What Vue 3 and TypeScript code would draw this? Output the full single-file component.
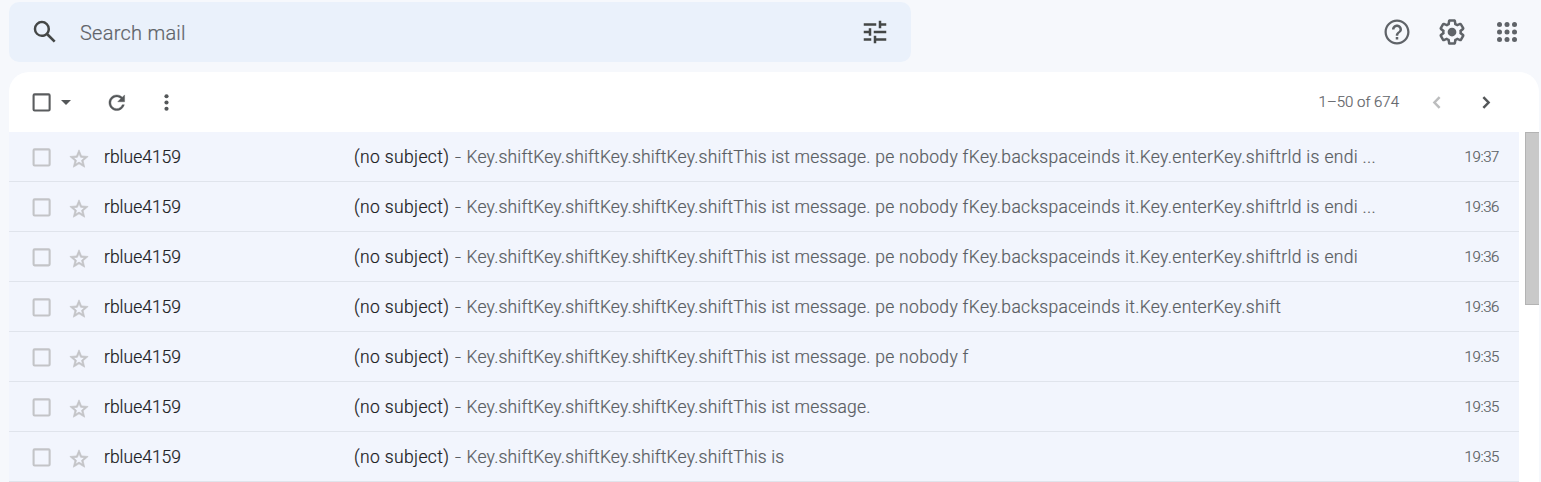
<script setup lang="ts">
interface Mail {
  id: number
  sender: string
  subject: string
  lead: string
  rest: string
  time: string
}

const keys = 'Key.shiftKey.shiftKey.shiftKey.shift'
const bodies: [string, string, string][] = [
  ['This ist message.', ' pe nobody fKey.backspaceinds it.Key.enterKey.shiftrld is endi ...', '19:37'],
  ['This ist message.', ' pe nobody fKey.backspaceinds it.Key.enterKey.shiftrld is endi ...', '19:36'],
  ['This ist message.', ' pe nobody fKey.backspaceinds it.Key.enterKey.shiftrld is endi', '19:36'],
  ['This ist message.', ' pe nobody fKey.backspaceinds it.Key.enterKey.shift', '19:36'],
  ['This ist message.', ' pe nobody f', '19:35'],
  ['This ist message.', '', '19:35'],
  ['This is', '', '19:35'],
]
const mails: Mail[] = bodies.map(([lead, rest, time], id) => ({
  id,
  sender: 'rblue4159',
  subject: '(no subject)',
  lead: keys + lead,
  rest,
  time,
}))
const dots = [6, 12, 18]
</script>

<template>
  <div class="page">
    <header class="header">
      <div class="search">
        <svg class="icon-lg" viewBox="0 0 24 24"><path d="M20.49 19l-5.73-5.73C15.53 12.2 16 10.91 16 9.5A6.5 6.5 0 1 0 9.5 16c1.41 0 2.7-.47 3.77-1.24L19 20.49 20.49 19zM5 9.5C5 7.01 7.01 5 9.5 5S14 7.01 14 9.5 11.99 14 9.5 14 5 11.99 5 9.5z" /></svg>
        <span class="placeholder">Search mail</span>
        <svg class="icon-lg" viewBox="0 0 24 24"><path d="M3 17v2h6v-2H3zM3 5v2h10V5H3zm10 16v-2h8v-2h-8v-2h-2v6h2zM7 9v2H3v2h4v2h2V9H7zm14 4v-2H11v2h10zm-6-4h2V7h4V5h-4V3h-2v6z" /></svg>
      </div>
      <nav class="actions">
        <svg class="icon-lg" viewBox="0 0 24 24"><path d="M11 18h2v-2h-2v2zm1-16C6.48 2 2 6.48 2 12s4.48 10 10 10 10-4.48 10-10S17.52 2 12 2zm0 18.200c-4.520 0-8.200-3.680-8.200-8.200S7.480 3.800 12 3.800s8.200 3.680 8.200 8.200-3.680 8.200-8.200 8.200zM12 6c-2.210 0-4 1.790-4 4h2c0-1.100.9-2 2-2s2 .9 2 2c0 2-3 1.750-3 5h2c0-2.250 3-2.500 3-5 0-2.210-1.790-4-4-4z" /></svg>
        <svg class="icon-lg" viewBox="0 0 24 24">
          <path fill-rule="evenodd" d="M13.850 22.250h-3.700c-.74 0-1.360-.54-1.450-1.270l-.27-1.890c-.27-.14-.53-.29-.79-.46l-1.800.72c-.7.26-1.470-.03-1.810-.65L2.200 15.530c-.35-.66-.2-1.440.36-1.880l1.530-1.190c-.01-.15-.02-.3-.02-.46 0-.15.01-.31.02-.46l-1.520-1.190c-.59-.45-.74-1.260-.37-1.880l1.850-3.190c.34-.62 1.110-.9 1.790-.63l1.810.73c.26-.17.52-.32.78-.46l.27-1.910c.09-.7.71-1.250 1.440-1.250h3.700c.74 0 1.360.54 1.450 1.270l.27 1.890c.27.14.53.29.79.46l1.800-.72c.71-.26 1.480.03 1.820.65l1.840 3.180c.36.66.2 1.440-.36 1.880l-1.520 1.190c.01.15.02.3.02.46s-.01.31-.02.46l1.520 1.190c.56.45.72 1.230.37 1.860l-1.860 3.220c-.34.62-1.110.9-1.800.63l-1.800-.72c-.26.17-.52.32-.78.46l-.27 1.910c-.1.68-.72 1.220-1.460 1.220zm-3.230-2h2.760l.37-2.550.53-.22c.44-.18.88-.44 1.340-.78l.45-.34 2.380.96 1.380-2.400-2.030-1.580.07-.56c.03-.26.06-.51.06-.78s-.03-.53-.06-.78l-.07-.56 2.030-1.580-1.390-2.400-2.390.96-.45-.35c-.42-.32-.87-.58-1.330-.77l-.52-.22-.37-2.550h-2.760l-.37 2.550-.53.21c-.44.19-.88.44-1.340.79l-.45.33-2.380-.95-1.390 2.390 2.030 1.580-.07.56a7 7 0 0 0-.06.79c0 .26.02.53.06.78l.07.56-2.030 1.580 1.380 2.400 2.390-.96.45.35c.43.33.86.58 1.330.77l.53.22.38 2.550z" />
          <circle cx="12" cy="12" r="3.500" />
        </svg>
        <svg class="icon-lg" viewBox="0 0 24 24">
          <template v-for="y in dots" :key="y">
            <circle v-for="x in dots" :key="x" :cx="x" :cy="y" r="2" />
          </template>
        </svg>
      </nav>
    </header>

    <main class="panel">
      <div class="toolbar">
        <svg class="icon box" viewBox="0 0 24 24"><rect x="4.400" y="4.200" width="15.400" height="15.400" rx="1" /></svg>
        <svg class="caret" viewBox="0 0 10 5"><path d="M0 0h10L5 5z" /></svg>
        <svg class="icon refresh" viewBox="0 0 24 24"><path d="M17.650 6.350C16.200 4.900 14.210 4 12 4c-4.420 0-7.990 3.580-7.990 8s3.570 8 7.990 8c3.730 0 6.840-2.550 7.730-6h-2.080c-.82 2.330-3.040 4-5.650 4-3.310 0-6-2.690-6-6s2.690-6 6-6c1.660 0 3.140.69 4.220 1.780L13 11h7V4l-2.350 2.350z" /></svg>
        <svg class="icon more" viewBox="0 0 24 24"><circle v-for="y in dots" :key="y" cx="12" :cy="y" r="2" /></svg>
        <span class="count">1–50 of 674</span>
        <svg class="icon prev" viewBox="0 0 24 24"><path d="M15 6.800l-5 5.200 5 5.200" /></svg>
        <svg class="icon next" viewBox="0 0 24 24"><path d="M9 6.800l5 5.200-5 5.200" /></svg>
      </div>
      <div class="content">
        <div class="list">
          <div v-for="mail in mails" :key="mail.id" class="row">
            <svg class="icon box" viewBox="0 0 24 24"><rect x="4.400" y="4.200" width="15.400" height="15.400" rx="1" /></svg>
            <svg class="icon star" viewBox="0 0 24 24"><path d="M22 9.240l-7.190-.62L12 2 9.190 8.630 2 9.240l5.460 4.730L5.820 21 12 17.270 18.180 21l-1.630-7.030L22 9.240zM12 15.400l-3.760 2.270 1-4.280-3.320-2.880 4.380-.38L12 6.100l1.710 4.040 4.380.38-3.320 2.880 1 4.280L12 15.400z" /></svg>
            <span class="sender">{{ mail.sender }}</span>
            <span class="subject">{{ mail.subject }}</span>
            <span class="dash">-</span>
            <span class="snippet">{{ mail.lead }}<span class="rest">{{ mail.rest }}</span></span>
            <time class="time">{{ mail.time }}</time>
          </div>
        </div>
        <div class="scroll"><div class="thumb"></div></div>
      </div>
    </main>
  </div>
</template>

<style>
body {
  overflow: hidden;
  background: #f6f8fc;
}
</style>

<style scoped>
.page {
  box-sizing: border-box;
  width: 1541px;
  height: 482px;
  padding: 2px 2px 0 9px;
  overflow: hidden;
  background: #f6f8fc;
  font-family: Roboto, "Open Sans", sans-serif;
  font-weight: 300;
  white-space: nowrap;
  -webkit-text-stroke-width: 0.2px;
}
.header {
  display: flex;
  height: 60px;
  margin-bottom: 10px;
  justify-content: space-between;
}
.search {
  box-sizing: border-box;
  display: flex;
  align-items: center;
  width: 902px;
  padding: 0 21px;
  border-radius: 10px;
  background: #eaf1fb;
  fill: #444746;
}
.placeholder {
  flex: 1;
  margin: 2px 0 0 20px;
  color: #5f6368;
  font-size: 20px;
  letter-spacing: 0.25px;
}
.actions {
  display: flex;
  align-items: center;
  gap: 25px;
  padding-right: 17px;
  fill: #5f6368;
}
svg {
  flex: none;
}
.icon-lg {
  width: 30px;
  height: 30px;
}
.icon {
  width: 25px;
  height: 25px;
}
.box {
  fill: none;
  stroke: #5a5c5e;
  stroke-width: 2;
}
.panel {
  height: 410px;
  border-radius: 20px 20px 0 0;
  background: #fff;
}
.toolbar {
  box-sizing: border-box;
  display: flex;
  align-items: center;
  height: 60px;
  padding: 1px 40px 0 20px;
  fill: #545759;
}
.caret {
  width: 10px;
  height: 5px;
  margin-left: 7px;
}
.refresh {
  width: 23.5px;
  height: 23.5px;
  margin-left: 33.5px;
  stroke: #545759;
  stroke-width: 0.4;
}
.more {
  margin-left: 26px;
}
.count {
  margin: 0 0 2px auto;
  color: #5f6368;
  font-size: 15px;
}
.prev,
.next {
  margin-left: 25px;
  fill: none;
  stroke: #545759;
  stroke-width: 2.4;
}
.prev {
  stroke: #bcbdbe;
}
.content {
  display: flex;
  height: 350px;
}
.list {
  width: 1510px;
}
.row {
  box-sizing: border-box;
  display: flex;
  align-items: center;
  height: 50px;
  padding: 1px 20px 0 20px;
  border-bottom: 1px solid #e0e4ec;
  background: #f2f5fd;
  color: #5a5e63;
  font-size: 17.5px;
}
.row .box {
  stroke: #c3c4c7;
}
.star {
  width: 22px;
  height: 22px;
  margin: 3px 0 0 14px;
  fill: #c3c4c7;
  stroke: #c3c4c7;
  stroke-width: 0.7;
}
.sender {
  width: 250px;
  margin-left: 14px;
  color: #202124;
}
.subject {
  width: 100.5px;
  color: #202124;
  letter-spacing: 0.37px;
}
.dash {
  width: 12px;
  transform: scaleX(1.2);
  transform-origin: 0 50%;
}
.snippet {
  letter-spacing: 0.165px;
}
.rest {
  letter-spacing: 0.32px;
  white-space: pre;
}
.time {
  margin-left: auto;
  font-size: 15px;
  letter-spacing: -0.4px;
}
.scroll {
  width: 14px;
  margin-left: 6px;
}
.thumb {
  box-sizing: border-box;
  height: 173px;
  border: 1px solid #b3b3b3;
  border-right: 0;
  background: #c9c9c9;
}
</style>
